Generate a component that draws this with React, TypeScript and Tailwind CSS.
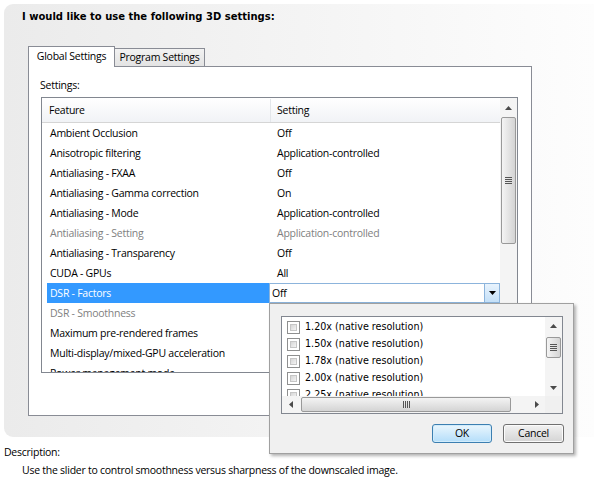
import React from "react";

const seg = "font-['Open_Sans',sans-serif] text-[10.5px] tracking-[-0.25px]";
const tah = "font-['DejaVu_Sans',sans-serif]";

type Row = { f: string; s: string; dim?: boolean; sel?: boolean };

const rows: Row[] = [
  { f: "Ambient Occlusion", s: "Off" },
  { f: "Anisotropic filtering", s: "Application-controlled" },
  { f: "Antialiasing - FXAA", s: "Off" },
  { f: "Antialiasing - Gamma correction", s: "On" },
  { f: "Antialiasing - Mode", s: "Application-controlled" },
  { f: "Antialiasing - Setting", s: "Application-controlled", dim: true },
  { f: "Antialiasing - Transparency", s: "Off" },
  { f: "CUDA - GPUs", s: "All" },
  { f: "DSR - Factors", s: "Off", sel: true },
  { f: "DSR - Smoothness", s: "33%", dim: true },
  { f: "Maximum pre-rendered frames", s: "Use the 3D application setting" },
  { f: "Multi-display/mixed-GPU acceleration", s: "Single display performance mode" },
  { f: "Power management mode", s: "Adaptive" },
];

const factors = ["1.20x", "1.50x", "1.78x", "2.00x", "2.25x"];

function Tri({ dir, color = "#4a4a4a" }: { dir: "up" | "down" | "left" | "right"; color?: string }) {
  const v = dir === "up" || dir === "down";
  const pts = {
    up: "0,4 7,4 3.5,0",
    down: "0,0 7,0 3.5,4",
    left: "4,0 4,7 0,3.5",
    right: "0,0 0,7 4,3.5",
  }[dir];
  return (
    <svg width={v ? 7 : 4} height={v ? 4 : 7} viewBox={v ? "0 0 7 4" : "0 0 4 7"}>
      <polygon points={pts} fill={color} />
    </svg>
  );
}

function GripV() {
  return (
    <div className="flex flex-col gap-[1px]">
      {[0, 1, 2, 3].map((i) => (
        <div key={i} className="w-[7px] h-px bg-[#555]" />
      ))}
    </div>
  );
}

function GripH() {
  return (
    <div className="flex gap-[1px]">
      {[0, 1, 2, 3].map((i) => (
        <div key={i} className="w-px h-[7px] bg-[#555]" />
      ))}
    </div>
  );
}

function Combo() {
  return (
    <div className="-ml-px w-[231px] h-[20px] border border-[#8cb4dc] bg-white flex items-center">
      <span className="pl-[2px] pt-px">Off</span>
      <div className="ml-auto w-[15px] h-full border-l border-[#8cb4dc] bg-linear-to-b from-[#e8f3fd] to-[#c4e0f8] flex items-center justify-center">
        <Tri dir="down" color="#000" />
      </div>
    </div>
  );
}

function Checkbox() {
  return (
    <div className="w-[13px] h-[13px] shrink-0 border border-[#8e8f8f] bg-white p-[2px]">
      <div className="w-full h-full bg-linear-to-br from-[#d6d6d6] to-[#f4f4f4] border border-[#c6c6c6]" />
    </div>
  );
}

const App = () => {
  return (
    <div className="relative w-[594px] h-[492px] overflow-hidden bg-white text-black">
      <div className="ml-[4px] mt-[4px] h-[433px] rounded-l-[9px] bg-linear-to-r from-[#ebebeb] to-[#fdfdfd] pt-[6px]">
        <div className={`${tah} ml-[18px] text-[10px] font-bold leading-[14px]`}>
          I would like to use the following 3D settings:
        </div>

        {/* tabs */}
        <div className={`${seg} relative z-10 ml-[24px] mt-[22px] -mb-px flex items-end h-[21px]`}>
          <div className="w-[87px] h-[21px] border-x border-t border-[#898c95] bg-white flex items-center justify-center">
            Global Settings
          </div>
          <div className="w-[90px] h-[18px] mb-px border-t border-r border-[#898c95] bg-linear-to-b from-[#f2f2f2] to-[#e3e3e3] flex items-center justify-center pt-px">
            Program Settings
          </div>
        </div>

        <div className="ml-[24px] w-[504px] h-[350px] border border-[#898c95] bg-white pt-[10px] pl-[11px]">
          <div className={`${seg} leading-[16px]`}>Settings:</div>

          <div className="mt-[4px] ml-[1px] w-[477px] h-[276px] border border-[#828790] flex overflow-hidden">
            <div className={`${seg} w-[458px] shrink-0 flex flex-col overflow-hidden whitespace-nowrap`}>
              <div className="h-[25px] shrink-0 flex border-b border-[#d5d5d5] bg-linear-to-b from-white to-[#f1f3f6] pt-px">
                <div className="w-[229px] border-r border-[#e3e6ea] pl-[7px] flex items-center">Feature</div>
                <div className="pl-[6px] flex items-center">Setting</div>
              </div>
              {rows.map((r) => (
                <div key={r.f} className="flex h-[20px] shrink-0 items-center">
                  <div className="w-[228px] h-full pl-[5px]">
                    <div
                      className={`h-full pl-[3px] pt-px flex items-center ${
                        r.sel ? "bg-[#3399ff] text-white" : r.dim ? "text-[#7f7f7f]" : ""
                      }`}
                    >
                      {r.f}
                    </div>
                  </div>
                  {r.sel ? (
                    <Combo />
                  ) : (
                    <div className={`pl-[7px] pt-px ${r.dim ? "text-[#7f7f7f]" : ""}`}>{r.s}</div>
                  )}
                </div>
              ))}
            </div>

            {/* scrollbar */}
            <div className="w-[17px] shrink-0 bg-[#f4f4f4] flex flex-col items-center">
              <div className="h-[19px] flex items-center justify-center">
                <Tri dir="up" />
              </div>
              <div className="w-[15px] h-[127px] rounded-[2px] border border-[#999] bg-linear-to-r from-[#f4f4f4] to-[#d4d4d4] flex items-center justify-center">
                <GripV />
              </div>
            </div>
          </div>
        </div>
      </div>

      <div className={`${seg} ml-[4px] mt-[8px] leading-[14px]`}>Description:</div>
      <div className={`${seg} ml-[22px] mt-[4px] leading-[14px]`}>
        Use the slider to control smoothness versus sharpness of the downscaled image.
      </div>

      {/* DSR factors drop-down */}
      <div className="absolute left-[269px] top-[303px] w-[305px] h-[151px] bg-[#f0f0f0] border border-[#a0a0a0] shadow-[2px_2px_3px_rgba(0,0,0,0.3)]">
        <div className="ml-[11px] mt-[12px] w-[282px] h-[98px] border border-[#828790] bg-white flex flex-col">
          <div className="h-[79px] flex">
            <div className={`${tah} w-[263px] overflow-hidden pt-[2px] text-[9.6px] whitespace-nowrap`}>
              {factors.map((f) => (
                <div key={f} className="h-[17px] flex items-center pl-[5px] gap-[5px]">
                  <Checkbox />
                  <span>{f} (native resolution)</span>
                </div>
              ))}
            </div>
            <div className="w-[17px] bg-[#f4f4f4] flex flex-col items-center">
              <div className="h-[17px] flex items-center justify-center">
                <Tri dir="up" />
              </div>
              <div className="mt-[3px] w-[15px] h-[21px] rounded-[2px] border border-[#999] bg-linear-to-r from-[#f4f4f4] to-[#d4d4d4] flex items-center justify-center">
                <GripV />
              </div>
              <div className="flex-1" />
              <div className="h-[17px] flex items-center justify-center">
                <Tri dir="down" />
              </div>
            </div>
          </div>
          <div className="h-[17px] flex">
            <div className="w-[263px] bg-[#f4f4f4] flex items-center">
              <div className="w-[17px] h-full flex items-center justify-center">
                <Tri dir="left" />
              </div>
              <div className="ml-[2px] w-[210px] h-[15px] rounded-[2px] border border-[#999] bg-linear-to-b from-[#f4f4f4] to-[#d4d4d4] flex items-center justify-center">
                <GripH />
              </div>
              <div className="flex-1" />
              <div className="w-[17px] h-full flex items-center justify-center">
                <Tri dir="right" />
              </div>
            </div>
            <div className="w-[17px] bg-[#f0f0f0]" />
          </div>
        </div>

        <div className={`${seg} mt-[10px] pr-[9px] flex justify-end gap-[11px]`}>
          <div className="w-[60px] h-[19px] rounded-[3px] border border-[#3c7fb1] bg-linear-to-b from-[#eaf6fd] to-[#b4defa] shadow-[inset_0_0_0_1px_#d2ecfb] flex items-center justify-center">
            OK
          </div>
          <div className="w-[61px] h-[19px] rounded-[3px] border border-[#707070] bg-linear-to-b from-[#f2f2f2] to-[#d4d4d4] shadow-[inset_0_0_0_1px_#fbfbfb] flex items-center justify-center">
            Cancel
          </div>
        </div>
      </div>
    </div>
  );
};

export default App;
